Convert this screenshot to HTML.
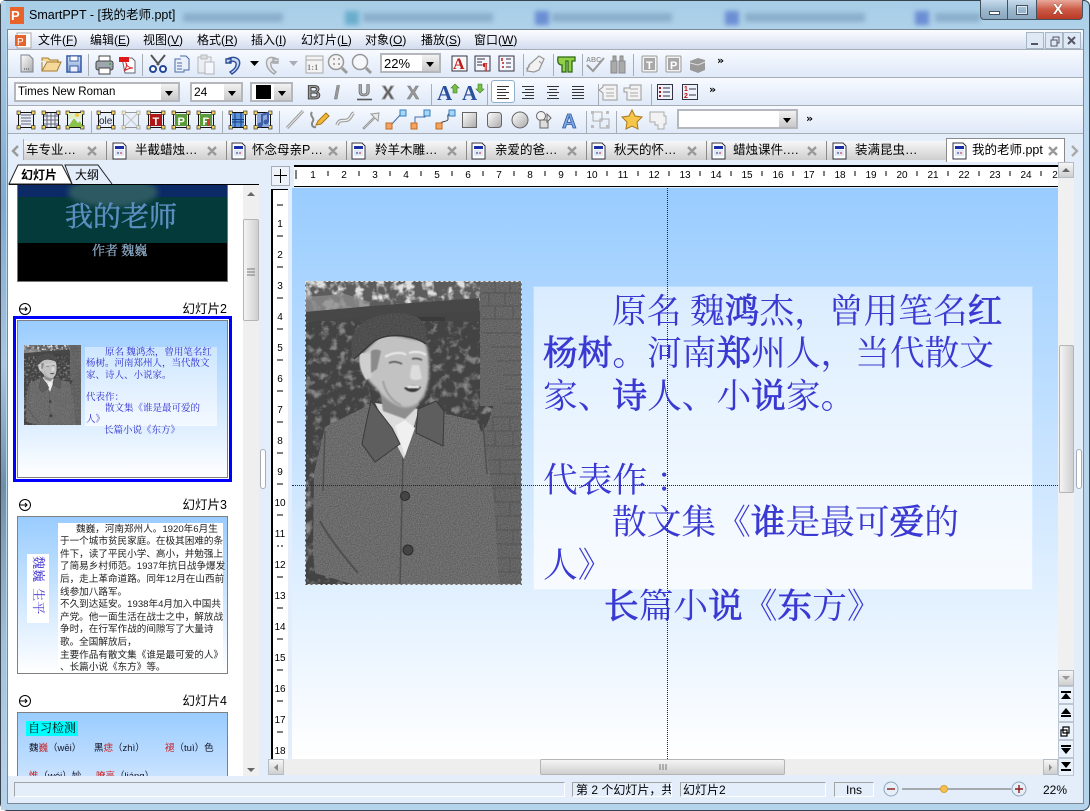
<!DOCTYPE html>
<html lang="zh"><head><meta charset="utf-8"><title>SmartPPT</title>
<style>
html,body{margin:0;padding:0;width:1090px;height:811px;overflow:hidden;background:#fff}
body{position:relative;font:12px "Liberation Sans","Noto Sans CJK SC",sans-serif;color:#000}
.a,.t{position:absolute}
.t{white-space:nowrap;line-height:16px}
.combo{position:absolute;background:#fff;border:2px solid #b4b8bc;box-sizing:border-box}
.combo i{position:absolute;right:0;top:0;bottom:0;width:17px;background:linear-gradient(#f2f2f2,#c9c9c9)}
.combo i:after{content:"";position:absolute;left:4px;top:7px;border:4px solid transparent;border-top:5px solid #000;border-bottom:0}
.hs{position:absolute;left:8px;width:1075px;height:1px;background:#a6adb5}
.tab{position:absolute;top:141px;height:19px;width:120px;box-sizing:border-box;border-left:1px solid #8a8a8a;background:linear-gradient(#f7f7f7,#cfcfcf)}
.tt{position:absolute;top:142px;white-space:nowrap;font-size:12.5px;line-height:17px}
.sl{position:absolute;white-space:nowrap;font:34.7px/42px "Liberation Serif","Noto Serif CJK SC",serif;color:#3a3ad2}
.sl b{font-weight:400;-webkit-text-stroke:.8px #3a3ad2}
.m{position:absolute;white-space:nowrap;font:9.5px/11px "Liberation Serif","Noto Serif CJK SC",serif;color:#2a2ad0}
.k{position:absolute;white-space:nowrap;font:9.6px/12.7px "Liberation Sans","Noto Sans CJK SC",sans-serif;color:#222}
.sb{position:absolute;background:linear-gradient(#f6f6f6,#cfcfcf);border:1px solid #b5bcc4;box-sizing:border-box}
.sd{position:absolute;left:1058px;width:16px;height:18px;box-sizing:border-box;background:#eaf2fb;border:1px solid #bcc6d2}
</style></head><body>

<!-- window chrome -->
<div class="a" style="left:0;top:0;width:1090px;height:811px;background:linear-gradient(#a6cde6,#b9d7ee 60px,#b5d4ec);border-radius:6px 6px 8px 8px;box-shadow:inset 0 0 0 1px #38434f"></div>
<div class="a" style="left:1px;top:1px;width:5px;height:809px;background:linear-gradient(#b5d5ea,#7fa9cf 25%,#a9c6df 45%,#6f8fa8 60%,#a3c2da 80%,#b8d4ea)"></div>

<!-- blurred background in title bar -->
<div class="a" style="left:180px;top:8px;width:800px;height:18px;overflow:hidden;filter:blur(2.5px)">
 <div class="a" style="left:3px;top:5px;width:100px;height:9px;background:#6f94b4;opacity:.55"></div>
 <div class="a" style="left:165px;top:3px;width:14px;height:14px;background:#4f9fc0;opacity:.7"></div>
 <div class="a" style="left:183px;top:5px;width:130px;height:9px;background:#6f94b4;opacity:.55"></div>
 <div class="a" style="left:355px;top:3px;width:14px;height:14px;background:#5577cc;opacity:.75"></div>
 <div class="a" style="left:372px;top:5px;width:120px;height:9px;background:#6f94b4;opacity:.55"></div>
 <div class="a" style="left:545px;top:3px;width:14px;height:14px;background:#5577cc;opacity:.75"></div>
 <div class="a" style="left:565px;top:5px;width:120px;height:9px;background:#6f94b4;opacity:.55"></div>
 <div class="a" style="left:735px;top:3px;width:14px;height:14px;background:#5577cc;opacity:.75"></div>
 <div class="a" style="left:755px;top:5px;width:45px;height:9px;background:#6f94b4;opacity:.55"></div>
</div>

<!-- title -->
<div class="a" style="left:10px;top:7px;width:14px;height:17px;background:#e8632a"></div>
<div class="a" style="left:11px;top:7px;color:#fff;font:bold 13px/17px 'Liberation Sans',sans-serif">P</div>
<div class="t" style="left:29px;top:7px;font-size:12.5px">SmartPPT - [我的老师.ppt]</div>

<!-- caption buttons -->
<div class="a" style="left:980px;top:0;width:28px;height:20px;box-sizing:border-box;background:linear-gradient(#c8dcec,#9db9cf 50%,#88a6bf);border:1px solid #44525f;border-top:0;border-radius:0 0 0 4px"></div>
<div class="a" style="left:1008px;top:0;width:28px;height:20px;box-sizing:border-box;background:linear-gradient(#c8dcec,#9db9cf 50%,#88a6bf);border-bottom:1px solid #44525f"></div>
<div class="a" style="left:1036px;top:0;width:47px;height:20px;box-sizing:border-box;background:linear-gradient(#e9a99c,#cb5a45 50%,#b93a26);border:1px solid #44525f;border-top:0;border-radius:0 0 4px 0"></div>
<div class="a" style="left:989px;top:11px;width:11px;height:4px;box-sizing:border-box;background:#fff;border:1px solid #44525f"></div>
<div class="a" style="left:1016px;top:5px;width:12px;height:10px;box-sizing:border-box;border:1px solid #44525f;outline:1px solid #dfe9f2;outline-offset:-2px"></div>
<div class="t" style="left:1053px;top:1px;color:#fff;font:bold 15px/18px 'Liberation Sans',sans-serif;text-shadow:0 0 1px #5a1a10">X</div>

<!-- client -->
<div class="a" style="left:7px;top:29px;width:1077px;height:775px;background:#e4eefb;border:1px solid #7c8893;box-sizing:border-box"></div>

<!-- menu bar -->
<div class="a" style="left:8px;top:30px;width:1075px;height:19px;background:linear-gradient(#fafcff,#eef2fa 35%,#d3dcef)"></div>
<div class="hs" style="top:49px"></div>
<div class="t" style="left:38px;top:32px">文件(<u>F</u>)</div>
<div class="t" style="left:90px;top:32px">编辑(<u>E</u>)</div>
<div class="t" style="left:143px;top:32px">视图(<u>V</u>)</div>
<div class="t" style="left:197px;top:32px">格式(<u>R</u>)</div>
<div class="t" style="left:251px;top:32px">插入(<u>I</u>)</div>
<div class="t" style="left:301px;top:32px">幻灯片(<u>L</u>)</div>
<div class="t" style="left:365px;top:32px">对象(<u>O</u>)</div>
<div class="t" style="left:421px;top:32px">播放(<u>S</u>)</div>
<div class="t" style="left:474px;top:32px">窗口(<u>W</u>)</div>

<!-- toolbars -->
<div class="a" style="left:8px;top:50px;width:1075px;height:27px;background:linear-gradient(#f7faff,#dfe9f8)"></div>
<div class="hs" style="top:77px"></div>
<div class="a" style="left:8px;top:78px;width:1075px;height:27px;background:linear-gradient(#f7faff,#dfe9f8)"></div>
<div class="hs" style="top:105px"></div>
<div class="a" style="left:8px;top:106px;width:1075px;height:27px;background:linear-gradient(#f7faff,#dfe9f8)"></div>
<div class="hs" style="top:133px"></div>

<!-- combos -->
<div class="combo" style="left:380px;top:53px;width:61px;height:20px"><i></i><span class="a" style="left:2px;top:1px;font-size:13px;line-height:15px">22%</span></div>
<div class="combo" style="left:14px;top:82px;width:166px;height:20px"><i></i><span class="a" style="left:2px;top:1px;font-size:11.5px;line-height:15px">Times New Roman</span></div>
<div class="combo" style="left:190px;top:82px;width:53px;height:20px"><i></i><span class="a" style="left:2px;top:1px;font-size:12px;line-height:15px">24</span></div>
<div class="combo" style="left:250px;top:82px;width:43px;height:20px"><i></i><span class="a" style="left:4px;top:1px;width:15px;height:14px;background:#000"></span></div>
<div class="combo" style="left:677px;top:109px;width:121px;height:20px"><i></i></div>
<div class="a" style="left:491px;top:80px;width:24px;height:23px;box-sizing:border-box;background:#fff;border:1px solid #8fb0c8;border-radius:3px"></div>

<!-- icons layer -->
<svg class="a" style="left:0;top:0" width="1090" height="811" viewBox="0 0 1090 811">
<defs>
<linearGradient id="gg" x1="0" y1="0" x2="1" y2="1"><stop offset="0" stop-color="#fff"/><stop offset="1" stop-color="#a9a9a9"/></linearGradient>
<linearGradient id="bb" x1="0" y1="0" x2="0" y2="1"><stop offset="0" stop-color="#dbe7f7"/><stop offset="1" stop-color="#7e9fd0"/></linearGradient>
<g id="fr"><rect x="-7.500" y="-7.500" width="15" height="15" fill="#e8eef8" stroke="#111"/><g fill="#f6d25a" stroke="#333" stroke-width=".7"><rect x="-9" y="-9" width="3.400" height="3.400"/><rect x="5.600" y="-9" width="3.400" height="3.400"/><rect x="-9" y="5.600" width="3.400" height="3.400"/><rect x="5.600" y="5.600" width="3.400" height="3.400"/></g></g>
</defs>

<!-- mdi buttons -->
<g fill="#dfe9f5" stroke="#a6b6c6"><rect x="1026.500" y="32.500" width="17" height="16"/><rect x="1045.500" y="32.500" width="17" height="16"/><rect x="1063.500" y="32.500" width="17" height="16"/></g>
<path d="M1031 44h7" stroke="#556" stroke-width="2"/>
<path d="M1051 40h6v6h-6zM1053 40v-3h6v6h-2" fill="none" stroke="#556"/>
<path d="M1068 37l7 7M1075 37l-7 7" stroke="#556" stroke-width="2"/>
<!-- menu doc icon -->
<rect x="17" y="33" width="14" height="15" fill="#fff" stroke="#aaa"/><rect x="15" y="35" width="11" height="11" fill="#e8632a"/><text x="17" y="45" font-size="10" fill="#fff" font-family="Liberation Sans">P</text>

<!-- TB1 -->
<g transform="translate(0,-1)">
<path d="M21 56h8l4 4v13H21z" fill="url(#gg)" stroke="#7d8590"/><path d="M24 70h6" stroke="#445" stroke-dasharray="1 1"/>
<path d="M42 62v-3h6l2 2h8v3M42 72V63M42 72h15l4-9H47l-5 9z" fill="#f5d89a" stroke="#a67c2c"/>
<rect x="67" y="57" width="14" height="16" fill="url(#bb)" stroke="#3c5fa8" stroke-width="1.600"/><rect x="70" y="57" width="8" height="5" fill="#fff" stroke="#3c5fa8"/><rect x="70" y="67" width="8" height="6" fill="#eef" stroke="#3c5fa8"/>
<path d="M88.500 55v22" stroke="#a6adb5"/>
<rect x="96" y="62" width="17" height="9" rx="2" fill="#9ea6ae" stroke="#444"/><rect x="99" y="57" width="11" height="5" fill="#fff" stroke="#444"/><rect x="99" y="69" width="11" height="6" fill="#fff" stroke="#444"/><circle cx="110" cy="65" r="1" fill="#3a3"/>
<path d="M122 59h10l3 3v12h-10z" fill="#fff" stroke="#667"/><rect x="119" y="58" width="10" height="5" fill="#e01818"/><path d="M124 72c3-4 3-7 2-8 0 3 4 5 7 5-3 0-6 1-9 3z" fill="none" stroke="#d22"/>
<path d="M142.500 55v22" stroke="#a6adb5"/>
<path d="M165 56l-8 10M151 56l8 10" stroke="#555" stroke-width="2"/><circle cx="153" cy="70" r="3" fill="#fff" stroke="#23479b" stroke-width="2"/><circle cx="163" cy="70" r="3" fill="#fff" stroke="#23479b" stroke-width="2"/>
<path d="M175 60h7l2 2v11h-9z" fill="#eaf0fa" stroke="#4a6aa6"/><path d="M180 57h6l3 3v11h-5" fill="#eaf0fa" stroke="#4a6aa6"/><path d="M177 64h5M177 67h5M177 70h5" stroke="#4a6aa6"/>
<g opacity=".55"><rect x="198" y="58" width="13" height="16" fill="#eee" stroke="#888"/><rect x="201" y="56" width="6" height="4" fill="#ccc" stroke="#888"/><rect x="205" y="63" width="9" height="12" fill="#fff" stroke="#888"/></g>
<path d="M226 60h5v4h-5zM227 60c8-4 15 0 12 7-1 3-4 6-7 8l-2-2c3-2 6-4 6-7 1-3-3-5-7-3" fill="#c6d8f2" stroke="#2e4f9a" stroke-width="1.400"/>
<path d="M250 62h9l-4.500 5z" fill="#000"/>
<g opacity=".6"><path d="M278 60h-5v4h5zM277 60c-8-4-12 0-10 7 1 3 4 6 7 8l2-2c-3-2-5-4-5-7-1-3 2-5 6-3" fill="#e5e5e5" stroke="#777" stroke-width="1.400"/></g>
<path d="M289 62h9l-4.500 5z" fill="#aab"/>
<rect x="306" y="57" width="17" height="17" fill="#f3f3f3" stroke="#aaa"/><path d="M306 61h17" stroke="#aaa"/><text x="307" y="71" font-size="8.500" font-weight="bold" fill="#888" font-family="Liberation Serif">1:1</text>
<circle cx="336" cy="63" r="7.500" fill="#f3f3f3" stroke="#999" stroke-width="1.500"/><path d="M342 69l5 5" stroke="#999" stroke-width="3"/><path d="M333 60h2M338 60h2M333 65h2M338 65h2" stroke="#aaa" stroke-width="2"/>
<circle cx="360" cy="63" r="7.500" fill="#f5f7fa" stroke="#999" stroke-width="1.500"/><path d="M366 69l5 5" stroke="#999" stroke-width="3"/>
<rect x="452" y="57" width="15" height="15" fill="#f7f7f7" stroke="#334"/><text x="453" y="70" font-size="16" font-weight="bold" fill="#c01818" font-family="Liberation Serif">A</text>
<rect x="475" y="57" width="15" height="15" fill="#f4f6fb" stroke="#334"/><path d="M477 60h8M477 63h5M477 66h5" stroke="#334"/><text x="482" y="71" font-size="11" font-weight="bold" fill="#c01818" font-family="Liberation Serif">¶</text>
<rect x="499" y="57" width="15" height="15" fill="#f4f6fb" stroke="#334"/><path d="M506 60h5M506 64h5M506 68h5" stroke="#334"/><path d="M502 59v3M502 64h2M502 68h2" stroke="#c01818" stroke-width="1.500"/>
<path d="M523.500 55v22M553.500 55v22M582.500 55v22M633.500 55v22" stroke="#a6adb5"/>
<path d="M529 66l10-9 5 3-5 11-5 2-7-1z" fill="#f2f2f2" stroke="#999" stroke-width="1.300"/><path d="M539 62l3 3M526 70l4-3" stroke="#999"/>
<path d="M558 58h17v4h-3v11h-4V62h-2v11h-4v-7c-3 0-5-2-4-8z" fill="#8fd048" stroke="#2f6a10" stroke-width="1.300"/>
<g fill="none" stroke="#999" stroke-width="2"><path d="M587 66l6 6 11-13"/></g><text x="586" y="63" font-size="7" font-weight="bold" fill="#999" font-family="Liberation Sans">ABC</text>
<g fill="#aaa" stroke="#888"><rect x="611" y="62" width="6" height="12"/><rect x="619" y="62" width="6" height="12"/><rect x="613" y="57" width="3" height="5"/><rect x="620" y="57" width="3" height="5"/></g>
<rect x="642" y="57" width="15" height="16" rx="1" fill="#f2f2f2" stroke="#999"/><rect x="644" y="59" width="11" height="12" fill="#a8a8a8"/><text x="646" y="70" font-size="11" font-weight="bold" fill="#fff" font-family="Liberation Sans">T</text>
<rect x="666" y="57" width="15" height="16" rx="1" fill="#f2f2f2" stroke="#999"/><rect x="668" y="59" width="11" height="12" fill="#a8a8a8"/><text x="670" y="70" font-size="11" font-weight="bold" fill="#fff" font-family="Liberation Sans">P</text>
<path d="M690 62l8-3 7 2v10l-7 3-8-3z" fill="#999"/><path d="M690 64l8 2 7-3" stroke="#ddd" fill="none"/>
<text x="717" y="65" font-size="11" font-weight="bold" font-family="DejaVu Sans">»</text>
</g>

<!-- TB2 -->
<g transform="translate(0,-1)">
<text x="307" y="100" font-size="19" font-weight="bold" font-family="Liberation Sans" fill="#999" stroke="#333" stroke-width=".8">B</text>
<text x="334" y="100" font-size="19" font-weight="bold" font-style="italic" font-family="Liberation Sans" fill="#999" stroke="#666" stroke-width=".4">I</text>
<text x="358" y="97" font-size="17" font-weight="bold" font-family="Liberation Sans" fill="#aaa" stroke="#555" stroke-width=".6">U</text><path d="M357 100.500h15" stroke="#555" stroke-width="1.600"/>
<text x="382" y="100" font-size="18" font-weight="bold" font-family="Liberation Sans" fill="#555" stroke="#999">X</text>
<text x="407" y="100" font-size="18" font-weight="bold" font-family="Liberation Sans" fill="#999" stroke="#777" stroke-width=".5">X</text>
<path d="M431.500 85v21M598.500 85v21M651.500 85v21M487.500 85v21" stroke="#a6adb5"/>
<text x="437" y="101" font-size="21" font-weight="bold" font-family="Liberation Serif" fill="#2a4f9e">A</text><path d="M451 89l4-4 4 4h-2v5h-4v-5z" fill="#76c04a" stroke="#3b7a1c" stroke-width=".6"/>
<text x="462" y="101" font-size="21" font-weight="bold" font-family="Liberation Serif" fill="#2a4f9e">A</text><path d="M476 90l4 4 4-4h-2v-5h-4v5z" fill="#76c04a" stroke="#3b7a1c" stroke-width=".6"/>
<g stroke="#333"><path d="M497 87.500h12M497 90.500h9M497 93.500h12M497 96.500h9M497 99.500h12"/><path d="M522 87.500h12M525 90.500h9M522 93.500h12M525 96.500h9M522 99.500h12"/><path d="M547 87.500h12M549 90.500h8M547 93.500h12M549 96.500h8M547 99.500h12"/><path d="M572 87.500h12M572 90.500h12M572 93.500h12M572 96.500h12M572 99.500h12"/></g>
<g fill="#f2f2f2" stroke="#999"><path d="M603 86h14v15h-14v-7l-4-3 4-3z"/><path d="M630 86h11v15h-14v-8l-3 0v-4h6z"/></g><path d="M606 90h8M606 94h8M606 97h8M630 90h8M630 94h8M630 97h8" stroke="#aaa"/>
<rect x="657.500" y="85.500" width="15" height="15" fill="#eef2fa" stroke="#334"/><path d="M663 89h7M663 93h7M663 97h7" stroke="#334"/><path d="M660 88v2M660 92v2M660 96v2" stroke="#a11" stroke-width="2"/>
<rect x="682.500" y="85.500" width="15" height="15" fill="#eef2fa" stroke="#334"/><path d="M689 90h7M689 96h7" stroke="#334"/><text x="684" y="92" font-size="7" font-weight="bold" fill="#b11" font-family="Liberation Sans">1</text><text x="684" y="99" font-size="7" font-weight="bold" fill="#b11" font-family="Liberation Sans">2</text>
<text x="709" y="94" font-size="11" font-weight="bold" font-family="DejaVu Sans">»</text>
</g>

<!-- TB3 -->
<g transform="translate(0,-2)">
<use href="#fr" x="26" y="122"/><path d="M21 117h10M21 120h10M21 123h10M21 126h10" stroke="#667"/>
<use href="#fr" x="51" y="122"/><path d="M44 118h14M44 122h14M44 126h14M47 115v14M51 115v14M55 115v14" stroke="#667"/>
<use href="#fr" x="75" y="122"/><path d="M68 129l6-9 4 5 2-2 3 6z" fill="#8bc34a"/><rect x="68" y="115" width="14" height="6" fill="#dff0c8"/><circle cx="77" cy="117" r="2" fill="#f6c64a"/>
<path d="M91.500 113v22" stroke="#a6adb5"/>
<use href="#fr" x="106" y="122"/><text x="99" y="126" font-size="10" font-family="Liberation Sans" fill="#223">ole</text>
<g opacity=".4"><use href="#fr" x="131" y="122"/><path d="M125 116l12 12M137 116l-12 12" stroke="#888"/></g>
<use href="#fr" x="156" y="122"/><rect x="150" y="116" width="12" height="12" fill="#b01818"/><text x="152.500" y="127" font-size="11" font-weight="bold" font-family="Liberation Sans" fill="#fff">T</text>
<use href="#fr" x="181" y="122"/><rect x="175" y="116" width="12" height="12" fill="#5a9a3a"/><text x="177.500" y="127" font-size="11" font-weight="bold" font-family="Liberation Sans" fill="#fff">P</text>
<use href="#fr" x="206" y="122"/><rect x="200" y="116" width="12" height="12" fill="#5a9a3a"/><text x="202.500" y="127" font-size="11" font-weight="bold" font-family="Liberation Sans" fill="#fff">P</text><rect x="207" y="121" width="3" height="7" fill="#d33"/>
<path d="M222.500 113v22" stroke="#a6adb5"/>
<use href="#fr" x="238" y="122"/><rect x="232" y="115" width="12" height="14" fill="#5e92d6"/><path d="M232 121.500h12M232 124h12M235 115v14M241 115v14" stroke="#123a80"/>
<use href="#fr" x="263" y="122"/><rect x="257" y="115" width="12" height="14" fill="#8fa8dc"/><path d="M262 127v-10l6-2v9" fill="none" stroke="#3e5ea8" stroke-width="2"/><circle cx="260" cy="127" r="2.500" fill="#3e5ea8"/><circle cx="266" cy="124" r="2.500" fill="#3e5ea8"/>
<path d="M279.500 113v22" stroke="#a6adb5"/>
<path d="M287 130l16-17" stroke="#999" stroke-width="3"/><path d="M287 130l16-17" stroke="#e8e8e8" stroke-width="1"/>
<path d="M312 114c-3 4 3 6 1 9s-1 7 3 6" fill="none" stroke="#888" stroke-width="2"/><path d="M316 127l2-4 8-8 3 3-8 8z" fill="#f4b93a" stroke="#a9781a"/>
<path d="M337 127c3-8 8-2 12-6s2-5 5-6" fill="none" stroke="#999" stroke-width="3.500"/><path d="M337 127c3-8 8-2 12-6s2-5 5-6" fill="none" stroke="#eee" stroke-width="1.400"/>
<path d="M363 130l11-11-3-3 8-1-1 8-3-3-11 11z" fill="#e8e8e8" stroke="#999"/>
<path d="M391 127l10-11" stroke="#3f6db0"/><rect x="386" y="125" width="6" height="6" fill="#f4a460" stroke="#c46a20"/><rect x="400" y="112" width="6" height="6" fill="#a9d6f5" stroke="#2f7ec0"/>
<path d="M415 127v-8h10v-4" fill="none" stroke="#3f6db0"/><rect x="411" y="125" width="6" height="6" fill="#f4a460" stroke="#c46a20"/><rect x="424" y="112" width="6" height="6" fill="#a9d6f5" stroke="#2f7ec0"/>
<path d="M440 127c0-5 9-2 8-7s2-5 5-5" fill="none" stroke="#444"/><rect x="436" y="125" width="6" height="6" fill="#f4a460" stroke="#c46a20"/><rect x="449" y="112" width="6" height="6" fill="#a9d6f5" stroke="#2f7ec0"/>
<rect x="462.500" y="114.500" width="14" height="15" fill="url(#gg)" stroke="#666"/>
<rect x="487.500" y="114.500" width="14" height="15" rx="3" fill="url(#gg)" stroke="#666"/>
<circle cx="520" cy="122" r="8" fill="url(#gg)" stroke="#666"/>
<circle cx="541" cy="118" r="4.500" fill="#f2f2f2" stroke="#666"/><rect x="540" y="122" width="8" height="8" fill="#ddd" stroke="#666"/><path d="M547 116l4 4-4 4z" fill="#eee" stroke="#666"/>
<text x="562" y="130" font-size="20" font-weight="bold" font-family="Liberation Sans" fill="#7ea6e0" stroke="#2f5aa8" stroke-width=".8">A</text>
<path d="M586.500 113v22M616.500 113v22" stroke="#a6adb5"/>
<g fill="none" stroke="#aaa"><rect x="593" y="114" width="9" height="9"/><rect x="600" y="121" width="9" height="9"/></g><g fill="#bbb"><rect x="591" y="113" width="3" height="3"/><rect x="606" y="113" width="3" height="3"/><rect x="591" y="127" width="3" height="3"/><rect x="606" y="127" width="3" height="3"/></g>
<path d="M632 112l3 6 7 1-5 5 1 7-6-3-6 3 1-7-5-5 7-1z" fill="#f6c64a" stroke="#a9781a"/>
<path d="M650 114h14v4h2v8h-2v5h-6v-4h-3v-3h-5z" fill="#f2f2f2" stroke="#aaa"/>
<text x="806" y="124" font-size="11" font-weight="bold" font-family="DejaVu Sans">»</text>
</g>
</svg>

<!-- tabs -->
<div class="tab" style="left:24px;width:82px;border-left:0"></div>
<div class="tab" style="left:106px"></div><div class="tab" style="left:226px"></div><div class="tab" style="left:346px"></div><div class="tab" style="left:466px"></div><div class="tab" style="left:586px"></div><div class="tab" style="left:706px"></div><div class="tab" style="left:826px"></div>
<div class="a" style="left:8px;top:139px;width:16px;height:21px;background:#e4eefb;border-right:1px solid #aaa;box-sizing:border-box"></div>
<div class="a" style="left:946px;top:138px;width:119px;height:24px;background:#fff;border:1px solid #8a8a8a;border-bottom:0;box-sizing:border-box"></div>
<div class="tt" style="left:26px">车专业…</div><div class="tt" style="left:135px">半截蜡烛…</div><div class="tt" style="left:252px">怀念母亲P…</div><div class="tt" style="left:375px">羚羊木雕…</div><div class="tt" style="left:495px">亲爱的爸…</div><div class="tt" style="left:614px">秋天的怀…</div><div class="tt" style="left:733px">蜡烛课件.…</div><div class="tt" style="left:855px">装满昆虫…</div><div class="tt" style="left:972px">我的老师.ppt</div>
<svg class="a" style="left:0;top:0" width="1090" height="170" viewBox="0 0 1090 170">
<defs><g id="ti"><path d="M0 0h10l3 3v13H0z" fill="#fff" stroke="#334"/><rect x="2" y="3" width="9" height="3" fill="#1b2fa8"/><rect x="2" y="7" width="9" height="6" fill="#dfe8f3"/><path d="M4 10h2" stroke="#1b2fa8"/><path d="M7 10h2" stroke="#c22"/></g></defs>
<use href="#ti" x="113" y="143"/><use href="#ti" x="232" y="143"/><use href="#ti" x="352" y="143"/><use href="#ti" x="472" y="143"/><use href="#ti" x="592" y="143"/><use href="#ti" x="712" y="143"/><use href="#ti" x="833" y="143"/><use href="#ti" x="953" y="143"/>
<g stroke="#999" stroke-width="2.400"><path d="M88 147l8 8M96 147l-8 8M208 147l8 8M216 147l-8 8M329 147l8 8M337 147l-8 8M448 147l8 8M456 147l-8 8M568 147l8 8M576 147l-8 8M688 147l8 8M696 147l-8 8M808 147l8 8M816 147l-8 8M1049 147l8 8M1057 147l-8 8"/></g>
<path d="M18 146l-5 5 5 5" fill="none" stroke="#999" stroke-width="2.400"/><path d="M1072 146l5 5-5 5" fill="none" stroke="#aaa" stroke-width="2.400"/>
</svg>

<!-- left panel -->
<div class="a" style="left:8px;top:185px;width:251px;height:591px;background:#fff;overflow:hidden">
 <div class="a" style="left:235px;top:0;width:16px;height:591px;background:#efefef"></div>
</div>
<div class="a" style="left:9px;top:184px;width:250px;height:1px;background:#000"></div>
<svg class="a" style="left:0;top:160px" width="120" height="26" viewBox="0 0 120 26"><path d="M72 24l-7-19h33l14 19" fill="#e4eefb" stroke="#222"/><path d="M9 24L18 5h44l10 19z" fill="#fff" stroke="#222"/></svg>
<div class="t" style="left:21px;top:167px;font-weight:bold">幻灯片</div>
<div class="t" style="left:75px;top:167px">大纲</div>

<!-- thumb 1 -->
<div class="a" style="left:17px;top:185px;width:211px;height:97px;box-sizing:border-box;border:1px solid #777;border-top:0;background:#000;overflow:hidden">
 <div class="a" style="left:0;top:0;width:211px;height:14px;background:#0b2a66"></div>
 <div class="a" style="left:0;top:12px;width:211px;height:46px;background:#053a3a"></div>
 <div class="a" style="left:50px;top:-8px;width:90px;height:30px;background:#2d5a62;border-radius:50%;filter:blur(3px)"></div>
 <div class="a" style="left:47px;top:15px;font:28px/36px 'Liberation Serif','Noto Serif CJK SC',serif;color:#5a8fc0;-webkit-text-stroke:.5px #5a8fc0;white-space:nowrap">我的老师</div>
 <div class="a" style="left:74px;top:58px;font:13px/16px 'Liberation Serif','Noto Serif CJK SC',serif;color:#8ba9c4;-webkit-text-stroke:.3px #8ba9c4;white-space:nowrap">作者 魏巍</div>
</div>

<!-- labels -->
<div class="t" style="right:863px;top:301px;font-size:12.5px">幻灯片2</div>
<div class="t" style="right:863px;top:497px;font-size:12.5px">幻灯片3</div>
<div class="t" style="right:863px;top:693px;font-size:12.5px">幻灯片4</div>
<svg class="a" style="left:18px;top:300px" width="16" height="410" viewBox="0 0 16 410"><g fill="none" stroke="#000"><circle cx="7" cy="9" r="5.500"/><path d="M1 9h8M7 7l2 2-2 2"/><circle cx="7" cy="205" r="5.500"/><path d="M1 205h8M7 203l2 2-2 2"/><circle cx="7" cy="401" r="5.500"/><path d="M1 401h8M7 399l2 2-2 2"/></g></svg>

<!-- thumb 2 -->
<div class="a" style="left:13px;top:316px;width:219px;height:166px;box-sizing:border-box;border:3px solid #00f"></div>
<div class="a" style="left:17px;top:320px;width:211px;height:158px;box-sizing:border-box;border:1px solid #808080;background:linear-gradient(#99ccff,#fff);overflow:hidden">
 <svg class="a" style="left:6px;top:24px" width="57" height="80" viewBox="0 0 217 304"><use href="#photo"/></svg>
 <div class="a" style="left:67px;top:26px;width:132px;height:79px;background:linear-gradient(#cde6ff,#f4f9ff)"></div>
 <div class="m" style="left:87px;top:27px">原名 魏鸿杰，曾用笔名红</div>
 <div class="m" style="left:68px;top:38px">杨树。河南郑州人，当代散文</div>
 <div class="m" style="left:68px;top:50px">家、诗人、小说家。</div>
 <div class="m" style="left:68px;top:72px">代表作：</div>
 <div class="m" style="left:87px;top:83px">散文集《谁是最可爱的</div>
 <div class="m" style="left:68px;top:94px">人》</div>
 <div class="m" style="left:86px;top:105px">长篇小说《东方》</div>
</div>

<!-- thumb 3 -->
<div class="a" style="left:17px;top:516px;width:211px;height:158px;box-sizing:border-box;border:1px solid #808080;background:linear-gradient(#99ccff,#fff);overflow:hidden">
 <div class="a" style="left:9px;top:37px;width:22px;height:69px;background:#fff"></div>
 <div class="a" style="left:13px;top:39px;width:14px;font:13px/14px 'Liberation Serif','Noto Serif CJK SC',serif;color:#3a2ad0;writing-mode:vertical-rl;text-orientation:sideways;white-space:nowrap;word-spacing:3px">魏巍 生平</div>
 <div class="a" style="left:40px;top:6px;width:165px;height:152px;background:linear-gradient(#fff 85%,rgba(255,255,255,.8))"></div>
 <div class="k" style="left:58px;top:7px">魏巍，河南郑州人。1920年6月生</div>
 <div class="k" style="left:42px;top:19px">于一个城市贫民家庭。在极其困难的条</div>
 <div class="k" style="left:42px;top:32px">件下，读了平民小学、高小，并勉强上</div>
 <div class="k" style="left:42px;top:44px">了简易乡村师范。1937年抗日战争爆发</div>
 <div class="k" style="left:42px;top:57px">后，走上革命道路。同年12月在山西前</div>
 <div class="k" style="left:42px;top:70px">线参加八路军。</div>
 <div class="k" style="left:42px;top:82px">不久到达延安。1938年4月加入中国共</div>
 <div class="k" style="left:42px;top:95px">产党。他一面生活在战士之中，解放战</div>
 <div class="k" style="left:42px;top:107px">争时，在行军作战的间隙写了大量诗</div>
 <div class="k" style="left:42px;top:120px">歌。全国解放后，</div>
 <div class="k" style="left:42px;top:133px">主要作品有散文集《谁是最可爱的人》</div>
 <div class="k" style="left:42px;top:145px">、长篇小说《东方》等。</div>
</div>

<!-- thumb 4 -->
<div class="a" style="left:17px;top:712px;width:211px;height:64px;box-sizing:border-box;border:1px solid #808080;border-bottom:0;background:linear-gradient(#99ccff,#c9e2ff);overflow:hidden">
 <div class="a" style="left:8px;top:8px;width:52px;height:15px;background:#0ff;font:12px/15px 'Liberation Serif','Noto Serif CJK SC',serif;text-align:center">自习检测</div>
 <div class="k" style="left:11px;top:30px;font-size:9.500px;color:#112">魏<span style="color:#c22">巍</span>（wēi）</div>
 <div class="k" style="left:76px;top:30px;font-size:9.500px;color:#112">黑<span style="color:#c22">痣</span>（zhì）</div>
 <div class="k" style="left:147px;top:30px;font-size:9.500px;color:#112"><span style="color:#c22">褪</span>（tuì）色</div>
 <div class="k" style="left:11px;top:58px;font-size:9.500px;color:#112"><span style="color:#c22">惟</span>（wéi）妙</div>
 <div class="k" style="left:78px;top:58px;font-size:9.500px;color:#112"><span style="color:#c22">嘹亮</span>（liáng）</div>
</div>

<!-- left scrollbar -->
<div class="a" style="left:243px;top:219px;width:16px;height:102px;box-sizing:border-box;background:linear-gradient(90deg,#f4f4f4,#cfcfcf);border:1px solid #b5b5b5;border-radius:2px"></div>
<svg class="a" style="left:243px;top:185px" width="16" height="592" viewBox="0 0 16 592"><path d="M4 11l4-4 4 4z" fill="#666"/><path d="M4 583l4 4 4-4z" fill="#666"/><path d="M4 84h8M4 87h8M4 90h8" stroke="#777"/></svg>
<div class="a" style="left:260px;top:449px;width:6px;height:40px;box-sizing:border-box;background:#fff;border:1px solid #a6adb5;border-radius:3px"></div>

<!-- rulers -->
<div class="a" style="left:271px;top:166px;width:19px;height:20px;box-sizing:border-box;border:1px solid #a6adb5;background:#eef3fb"></div>
<svg class="a" style="left:271px;top:166px" width="19" height="20" viewBox="0 0 19 20"><path d="M3 9.500h13M9.500 3v14" stroke="#000"/></svg>
<div class="a" style="left:294px;top:165px;width:764px;height:22px;background:#fff;border-top:2px solid #000;border-bottom:1px solid #000;box-sizing:border-box"></div>
<div class="a" style="left:271px;top:189px;width:17px;height:570px;background:#fff;border-left:2px solid #000;border-top:1px solid #000;box-sizing:border-box"></div>
<svg class="a" style="left:271px;top:160px" width="790" height="600" viewBox="0 0 790 600" font-family="Liberation Sans,sans-serif" font-size="10">
<g text-anchor="middle">
<text x="42" y="18">1</text><text x="73" y="18">2</text><text x="104" y="18">3</text><text x="135" y="18">4</text><text x="166" y="18">5</text><text x="197" y="18">6</text><text x="228" y="18">7</text><text x="259" y="18">8</text><text x="290" y="18">9</text><text x="321" y="18">10</text><text x="352" y="18">11</text><text x="383" y="18">12</text><text x="414" y="18">13</text><text x="445" y="18">14</text><text x="476" y="18">15</text><text x="507" y="18">16</text><text x="538" y="18">17</text><text x="569" y="18">18</text><text x="600" y="18">19</text><text x="631" y="18">20</text><text x="662" y="18">21</text><text x="693" y="18">22</text><text x="724" y="18">23</text><text x="755" y="18">24</text><text x="784" y="18">2</text>
<text x="9" y="67">1</text><text x="9" y="98">2</text><text x="9" y="129">3</text><text x="9" y="160">4</text><text x="9" y="191">5</text><text x="9" y="222">6</text><text x="9" y="253">7</text><text x="9" y="284">8</text><text x="9" y="315">9</text><text x="9" y="346">10</text><text x="9" y="377">11</text><text x="9" y="408">12</text><text x="9" y="439">13</text><text x="9" y="470">14</text><text x="9" y="501">15</text><text x="9" y="532">16</text><text x="9" y="563">17</text><text x="9" y="594">18</text>
</g>
<path d="M25 10v9M57 11v5M88 11v5M119 11v5M150 11v5M181 11v5M212 11v5M243 11v5M274 11v5M305 11v5M336 11v5M367 11v5M398 11v5M429 11v5M460 11v5M491 11v5M522 11v5M553 11v5M584 11v5M615 11v5M646 11v5M677 11v5M708 11v5M739 11v5M770 11v5" stroke="#000"/>
<path d="M6 45h6M6 76h6M6 107h6M6 138h6M6 169h6M6 200h6M6 231h6M6 262h6M6 293h6M6 324h6M6 355h6M6 386h2M10 386h2M6 417h6M6 448h6M6 479h6M6 510h6M6 541h6M6 572h6" stroke="#000"/>
</svg>

<!-- slide -->
<div class="a" style="left:292px;top:188px;width:766px;height:571px;background:linear-gradient(#99ccff,#fff);overflow:hidden"></div>
<div class="a" style="left:534px;top:287px;width:498px;height:302px;background:linear-gradient(rgba(255,255,255,.55),rgba(255,255,255,.75));box-shadow:0 0 0 1px rgba(255,255,255,.2)"></div>

<!-- photo -->
<svg class="a" style="left:305px;top:281px" width="217" height="304" viewBox="0 0 217 304">
<defs>
<filter id="lf" x="0" y="0" width="100%" height="100%" color-interpolation-filters="sRGB"><feTurbulence type="fractalNoise" baseFrequency=".12" numOctaves="3" seed="9"/><feColorMatrix values="0 0 0 0 .52 0 0 0 0 .52 0 0 0 0 .52 2.500 2.500 0 0 -2.500"/><feComposite in2="SourceAlpha" operator="in" result="n"/><feMerge><feMergeNode in="SourceGraphic"/><feMergeNode in="n"/></feMerge></filter>
<filter id="tf" x="0" y="0" width="100%" height="100%" color-interpolation-filters="sRGB"><feTurbulence type="fractalNoise" baseFrequency=".1" numOctaves="3" seed="5"/><feColorMatrix values="0 0 0 0 .88 0 0 0 0 .88 0 0 0 0 .88 3 3 0 0 -2.900"/><feComposite in2="SourceAlpha" operator="in" result="n"/><feMerge><feMergeNode in="SourceGraphic"/><feMergeNode in="n"/></feMerge></filter>
<filter id="ff" x="0" y="0" width="100%" height="100%" color-interpolation-filters="sRGB"><feTurbulence type="fractalNoise" baseFrequency=".9" numOctaves="2" seed="2"/><feColorMatrix values="0 0 0 0 0 0 0 0 0 0 0 0 0 0 0 .6 0 0 0 -.2"/><feComposite in2="SourceAlpha" operator="in" result="n"/><feMerge><feMergeNode in="SourceGraphic"/><feMergeNode in="n"/></feMerge></filter>
<filter id="bl" x="-10%" y="-10%" width="120%" height="120%"><feGaussianBlur stdDeviation="1.300"/></filter>
<filter id="b1" x="-10%" y="-10%" width="120%" height="120%"><feGaussianBlur stdDeviation=".6"/></filter>
<g id="photo">
<rect width="217" height="304" fill="#454545"/>
<rect width="176" height="30" fill="#5c5c5c" filter="url(#tf)"/>
<path d="M0 16l40-3 25 8v10H0z" fill="#8a8a8a" opacity=".8"/>
<path d="M0 31l66-6 108-8v13L66 36 0 41z" fill="#474747"/>
<rect x="112" y="36" width="28" height="40" fill="#3a3a3a"/>
<rect y="40" width="205" height="264" fill="#434343" filter="url(#lf)"/>
<rect x="175" width="42" height="125" fill="#727272" filter="url(#ff)"/>
<path d="M192 115h25v189h-33l-10-150 8-10z" fill="#707070" filter="url(#ff)"/>
<g stroke="#555" stroke-width="1"><path d="M176 12h41M176 25h41M176 38h41M178 52h39M186 66h31M192 80h25M198 94h19M200 108h17M197 122h20M187 136h30M182 150h35M181 165h36M182 179h35M182 193h35M185 207h32M183 221h34M184 235h33M185 249h32M184 263h33M186 277h31M186 291h31"/><path d="M190 0v12M205 0v12M184 12v13M200 12v13M190 25v13M208 25v13M188 136v14M205 136v14M190 150v15M208 150v15M195 179v14M210 193v14M190 207v14M205 221v14M192 235v14M208 249v14M190 263v14M205 277v14"/></g>
<path d="M20 146l40-20 60 2 52 12 8 20 9 60 5 84H50l-40-12-2-20 1-80z" fill="#787878" filter="url(#ff)"/>
<path d="M98 176l-3 128M20 150l-2 60M178 143l4 50" stroke="#505050" stroke-width="1.500" fill="none"/>
<path d="M15 240c5 10 15 25 38 52" stroke="#505050" stroke-width="2" fill="none"/>
<path d="M70 122l44 6-15 50z" fill="#dcdcdc"/>
<path d="M90 145l10 30 10-28-10-8z" fill="#f0f0f0"/>
<path d="M66 120l-4 18-5 25 13 18 25-18-8-16z" fill="#5e5e5e" stroke="#3a3a3a"/>
<path d="M113 128l-2 24 27 13 1-35-8-10z" fill="#5e5e5e" stroke="#3a3a3a"/>
<path d="M74 104h38l2 20-14 14-22-8z" fill="#8e8e8e" filter="url(#b1)"/>
<path d="M58 72c-3 12 2 26 12 34 8 10 22 22 34 20 16-3 20-20 20-40 0-10-1-20-5-26L78 52z" fill="#c2c2c2" filter="url(#bl)"/>
<path d="M55 72c-2 8 0 18 6 27l6-3-2-24z" fill="#cfcfcf" filter="url(#b1)"/>
<g filter="url(#b1)">
<path d="M66 70c3-2 7-2 10 0l-4 18-6 4z" fill="#8a8a8a"/>
<path d="M80 76c8-5 18-5 21-2M104 72c7-2 13-1 17 2" stroke="#e8e8e8" stroke-width="2.200" fill="none"/>
<path d="M84 82c4-2 9-1 13 1M107 78c3-1 6-1 10 1" stroke="#555" stroke-width="1.600" fill="none"/>
<path d="M99 107c6-3 12-3 17-1-3 6-12 7-17 1z" fill="#3a3a3a"/><path d="M101 105h13v2h-11z" fill="#eee"/>
<path d="M107 84c-1 5-3 11-1 14 4 2 9 1 11-1l-3-13z" fill="#dcdcdc"/>
<path d="M78 100c2 10 8 20 18 24" stroke="#a0a0a0" stroke-width="2" fill="none"/>
</g>
<path d="M48 78c-6-22 3-38 25-43 22-6 43-3 48 12 1 6 1 11 0 16-14-10-42-12-54-1-6 5-13 11-19 16z" fill="#585858" filter="url(#ff)"/>
<path d="M49 78c6-5 12-11 18-16 12-11 40-9 54 1" stroke="#3a3a3a" stroke-width="1.500" fill="none"/>
<circle cx="100" cy="215" r="4.500" fill="#444" stroke="#2a2a2a"/>
<circle cx="103" cy="269" r="5" fill="#444" stroke="#2a2a2a"/>
</g>
</defs>
<use href="#photo"/>
<rect x=".5" y=".5" width="216" height="303" fill="none" stroke="#ddd" stroke-dasharray="3 2"/>
</svg>

<!-- slide text -->
<div class="sl" style="left:612px;top:291px">原名 魏<b>鸿</b>杰，曾用笔名<b>红</b></div>
<div class="sl" style="left:543px;top:333px"><b>杨树</b>。河南<b>郑</b>州人，当代散文</div>
<div class="sl" style="left:543px;top:376px">家、<b>诗</b>人、小<b>说</b>家。</div>
<div class="sl" style="left:543px;top:460px">代表作<span style="margin-left:9px">：</span></div>
<div class="sl" style="left:612px;top:502px">散文集《<b>谁</b>是最可<b>爱</b>的</div>
<div class="sl" style="left:543px;top:545px">人》</div>
<div class="sl" style="left:604px;top:586px"><b>长</b>篇小<b>说</b>《<b>东</b>方》</div>

<!-- guides -->
<div class="a" style="left:667px;top:188px;width:0;height:571px;border-left:1px dotted #1a1a8c"></div>
<div class="a" style="left:292px;top:485px;width:766px;height:0;border-top:1px dotted #1a1a8c"></div>

<!-- right scrollbar -->
<div class="a" style="left:1058px;top:162px;width:16px;height:597px;background:#f0f0f0"></div>
<div class="sb" style="left:1058px;top:162px;width:16px;height:16px"></div>
<div class="sb" style="left:1058px;top:670px;width:16px;height:16px"></div>
<div class="a" style="left:1059px;top:345px;width:15px;height:148px;box-sizing:border-box;background:linear-gradient(90deg,#f4f4f4,#cfcfcf);border:1px solid #b5b5b5;border-radius:2px"></div>
<div class="a" style="left:1076px;top:449px;width:6px;height:40px;box-sizing:border-box;background:#fff;border:1px solid #a6adb5;border-radius:3px"></div>
<div class="sd" style="top:686px"></div><div class="sd" style="top:704px"></div><div class="sd" style="top:722px"></div><div class="sd" style="top:740px"></div><div class="sd" style="top:758px"></div>

<!-- h scrollbar -->
<div class="a" style="left:268px;top:759px;width:790px;height:16px;background:#eeeeee"></div>
<div class="a" style="left:540px;top:759px;width:245px;height:16px;box-sizing:border-box;background:linear-gradient(#f4f4f4,#cfcfcf);border:1px solid #b5b5b5;border-radius:2px"></div>
<div class="sb" style="left:1043px;top:759px;width:15px;height:16px"></div>
<div class="sb" style="left:268px;top:759px;width:16px;height:16px"></div>
<svg class="a" style="left:0;top:0" width="1090" height="811" viewBox="0 0 1090 811">
<path d="M1062 172l4-4 4 4z" fill="#666"/>
<path d="M1062 676h8l-4 4z" fill="#999"/>
<path d="M1061 691h10v2h-10zM1066 693l5 6h-10z" fill="#000"/>
<path d="M1066 708l5 6h-10zM1061 715h10v2h-10z" fill="#000"/>
<path d="M1063 727h6v6h-6zM1061 730h6v6h-6z" fill="#fff" stroke="#000" stroke-width="1.200"/>
<path d="M1061 745h10v2h-10zM1061 748h10l-5 6z" fill="#000"/>
<path d="M1061 762h10l-5 6zM1061 769h10v2h-10z" fill="#000"/>
<path d="M1049 764v7l3-3.500z" fill="#888"/>
<path d="M278 764v7l-4-3.500z" fill="#888"/>
<path d="M660 764v6M663 764v6M666 764v6" stroke="#777"/>
</svg>

<!-- bottom -->
<div class="a" style="left:8px;top:776px;width:1075px;height:27px;background:#e4eefb"></div>
<div class="a" style="left:14px;top:782px;width:551px;height:15px;box-sizing:border-box;border:1px solid #a3a3a3;border-right-color:#fff;border-bottom-color:#fff"></div>
<div class="a" style="left:572px;top:782px;width:100px;height:15px;box-sizing:border-box;border:1px solid #a3a3a3;border-right-color:#fff;border-bottom-color:#fff;overflow:hidden;padding-left:3px;line-height:14px;white-space:nowrap">第 2 个幻灯片，共</div>
<div class="a" style="left:680px;top:782px;width:146px;height:15px;box-sizing:border-box;border:1px solid #a3a3a3;border-right-color:#fff;border-bottom-color:#fff;padding-left:2px;line-height:14px;white-space:nowrap">幻灯片2</div>
<div class="a" style="left:834px;top:782px;width:40px;height:15px;box-sizing:border-box;border:1px solid #a3a3a3;border-right-color:#fff;border-bottom-color:#fff;text-align:center;line-height:14px">Ins</div>
<svg class="a" style="left:880px;top:778px" width="150" height="22" viewBox="0 0 150 22">
<line x1="22" y1="11" x2="131" y2="11" stroke="#666"/>
<circle cx="11" cy="11" r="7" fill="#e6eff8" stroke="#8fa6bc"/><path d="M7 11h8" stroke="#8a1a1a" stroke-width="1.400"/>
<circle cx="139" cy="11" r="7" fill="#e6eff8" stroke="#8fa6bc"/><path d="M135 11h8M139 7v8" stroke="#8a1a1a" stroke-width="1.400"/>
<circle cx="64" cy="11" r="3.500" fill="#f6c050" stroke="#d9a030"/>
</svg>
<div class="t" style="left:1043px;top:782px">22%</div>
<div class="a" style="left:8px;top:803px;width:1076px;height:1px;background:#7c8893"></div>
</body></html>
